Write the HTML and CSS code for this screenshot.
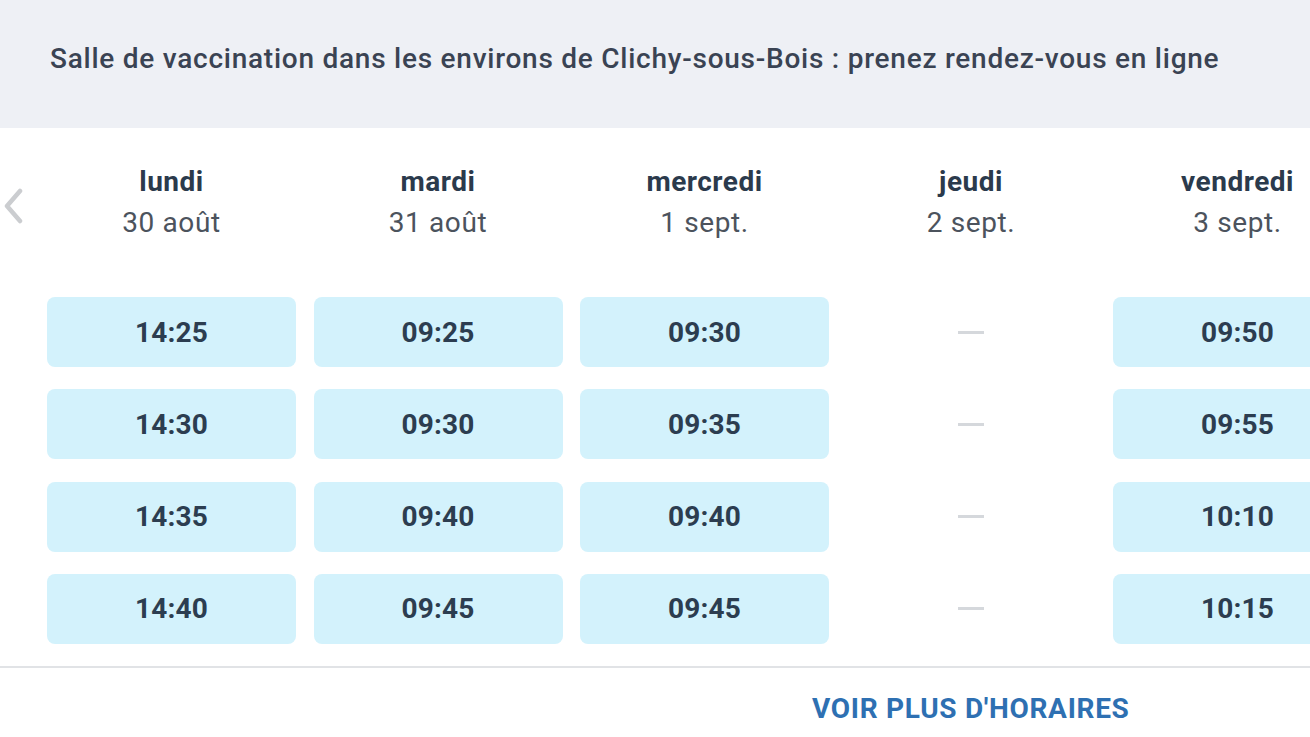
FILE: index.html
```html
<!DOCTYPE html>
<html lang="fr">
<head>
<meta charset="utf-8">
<title>Salle de vaccination</title>
<link rel="stylesheet" href="styles.css">
</head>
<body>
<div class="page">
  <header class="banner">
    <h1 class="banner-title">Salle de vaccination dans les environs de Clichy-sous-Bois : prenez rendez-vous en ligne</h1>
  </header>
  <section class="agenda">
    <button class="nav-prev" aria-label="Précédent">
      <svg width="22" height="36" viewBox="0 0 22 36"><path d="M18 3 L5 18 L18 33" fill="none" stroke="#cbcdd0" stroke-width="4.5" stroke-linecap="round" stroke-linejoin="round"/></svg>
    </button>
    <div class="days">
      <div class="day">
        <div class="day-head"><div class="day-name">lundi</div><div class="day-date">30 août</div></div>
        <div class="slots">
          <div class="slot">14:25</div><div class="slot">14:30</div><div class="slot">14:35</div><div class="slot">14:40</div>
        </div>
      </div>
      <div class="day">
        <div class="day-head"><div class="day-name">mardi</div><div class="day-date">31 août</div></div>
        <div class="slots">
          <div class="slot">09:25</div><div class="slot">09:30</div><div class="slot">09:40</div><div class="slot">09:45</div>
        </div>
      </div>
      <div class="day">
        <div class="day-head"><div class="day-name">mercredi</div><div class="day-date">1 sept.</div></div>
        <div class="slots">
          <div class="slot">09:30</div><div class="slot">09:35</div><div class="slot">09:40</div><div class="slot">09:45</div>
        </div>
      </div>
      <div class="day">
        <div class="day-head"><div class="day-name">jeudi</div><div class="day-date">2 sept.</div></div>
        <div class="slots">
          <div class="slot empty"><span class="dash"></span></div><div class="slot empty"><span class="dash"></span></div><div class="slot empty"><span class="dash"></span></div><div class="slot empty"><span class="dash"></span></div>
        </div>
      </div>
      <div class="day">
        <div class="day-head"><div class="day-name">vendredi</div><div class="day-date">3 sept.</div></div>
        <div class="slots">
          <div class="slot">09:50</div><div class="slot">09:55</div><div class="slot">10:10</div><div class="slot">10:15</div>
        </div>
      </div>
    </div>
  </section>
  <footer class="more">
    <a class="more-link" href="#">VOIR PLUS D'HORAIRES</a>
  </footer>
</div>
</body>
</html>
```
FILE: styles.css
```css
* { box-sizing: border-box; }
html, body { margin: 0; padding: 0; }
body {
  background: #ffffff;
  font-family: Roboto, "Liberation Sans", sans-serif;
  overflow: hidden;
  width: 1310px;
  height: 737px;
}
.page { width: 1310px; overflow: hidden; }
.banner {
  background: #eef0f5;
  height: 128px;
  display: flex;
  align-items: center;
  padding: 0 0 11px 50px;
}
.banner-title {
  margin: 0;
  font-size: 28px;
  font-weight: 500;
  color: #3a4353;
  white-space: nowrap;
  letter-spacing: 0.75px;
}
.agenda {
  position: relative;
  padding: 36px 0 0 47px;
  height: 540px;
  border-bottom: 2px solid #e1e3e6;
}
.nav-prev {
  position: absolute;
  left: 2px;
  top: 60px;
  background: none;
  border: 0;
  padding: 0;
}
.days {
  display: grid;
  grid-template-columns: repeat(5, 249px);
  column-gap: 17.5px;
}
.day { display: flex; flex-direction: column; }
.day-head {
  text-align: center;
  height: 133px;
}
.day-name {
  font-size: 28px;
  font-weight: 700;
  color: #2b3a4c;
  line-height: 36px;
  letter-spacing: 0.5px;
}
.day-date {
  font-size: 28px;
  font-weight: 400;
  color: #4c535d;
  line-height: 46px;
  letter-spacing: 0.6px;
}
.slots {
  display: flex;
  flex-direction: column;
  gap: 22.3px;
}
.slot {
  height: 70px;
  background: #d3f2fc;
  border-radius: 8px;
  display: flex;
  align-items: center;
  justify-content: center;
  font-size: 28px;
  font-weight: 700;
  color: #2c3d50;
  letter-spacing: 0.2px;
}
.slot.empty { background: transparent; }
.dash {
  display: block;
  width: 26px;
  height: 3px;
  background: #d5d8dc;
}
.more {
  display: flex;
  justify-content: flex-start;
  padding: 24px 0 0 812px;
}
.more-link {
  font-size: 28px;
  font-weight: 700;
  color: #2e70b2;
  text-decoration: none;
  white-space: nowrap;
  letter-spacing: 0.7px;
}
```
